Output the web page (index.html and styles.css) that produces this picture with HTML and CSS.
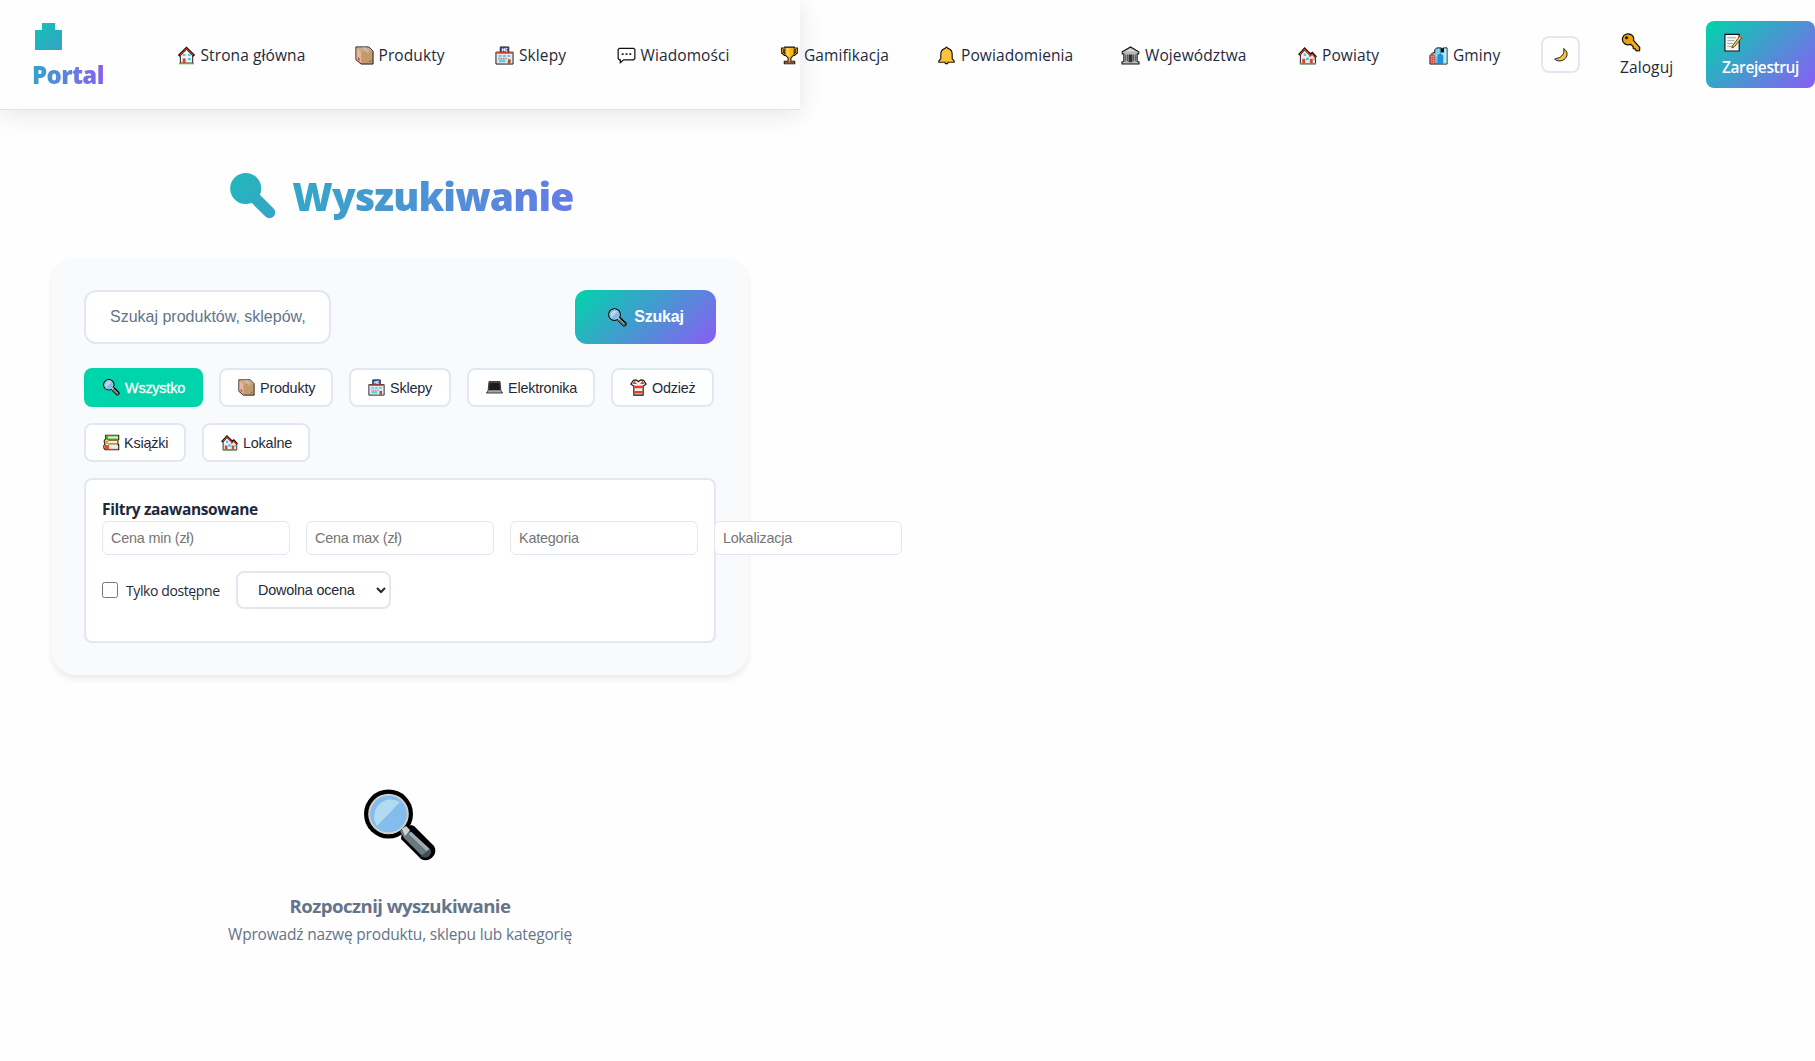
FILE: index.html
```html
<!DOCTYPE html>
<html lang="pl">
<head>
<meta charset="utf-8">
<title>Portal - Wyszukiwanie</title>
<link rel="stylesheet" href="styles.css">
</head>
<body>
<svg class="sprite" aria-hidden="true">
  <defs>
    <linearGradient id="brand" x1="0" y1="0" x2="1" y2="1"><stop offset="0" stop-color="#10c4b1"/><stop offset="1" stop-color="#39a0cb"/></linearGradient>
    <linearGradient id="lens" x1="0" y1="0" x2="46" y2="46" gradientUnits="userSpaceOnUse"><stop offset="0" stop-color="#22b8bb"/><stop offset="1" stop-color="#36a4c9"/></linearGradient>
    <symbol id="home" viewBox="0 0 20 20"><path d="M3.500 10v8h13v-8L10 3.500z" fill="#f2f2f2" stroke="#111"/><path d="M2 18.500h16" stroke="#5cbb2c" stroke-width="1.500"/><path d="M1.800 10.500 10 2.300l8.200 8.200" fill="none" stroke="#111" stroke-width="2.600"/><path d="M3 9.700 10 2.900l7 6.800" fill="none" stroke="#d63a22" stroke-width="1.300"/><path d="M6 8.500h3v2H6zm5.500 0h3v2h-3zm0 4h3v2.500h-3z" fill="#4cc9f5"/><path d="M6 13h3v5H6z" fill="#e5421f"/></symbol>
    <symbol id="box" viewBox="0 0 20 20"><path d="M1 1h13.500L19 5.500V19H6.500L1 14.500z" fill="#c49a6c" stroke="#111"/><path d="M1.600 1.600 6.500 6v12.300L1.600 14.200z" fill="#e2b99e"/><path d="M2 1.500h12.300l4.200 4H6.500z" fill="#cfa98a"/><path d="M7.500 1.500h3L14 6v2.500L12 6z" fill="#bec3c9"/><path d="M3 11.500v3l2 1.500v-3z" fill="#e2455a"/><path d="m15 17 2-2" stroke="#604529"/></symbol>
    <symbol id="shop" viewBox="0 0 20 20"><path d="M1 6.500h18V19H1z" fill="#e5e8ea" stroke="#111"/><path d="M5.500 1h9v6h-9z" fill="#315bd8" stroke="#222"/><path d="M8 2.500v3m0-1.500h2m0-1.500v3m3-3h-1.500v3H13" stroke="#fff" fill="none"/><path d="M1.500 7.300h17" stroke="#e64224" stroke-width="1.600"/><path d="M4 9.500h3v2H4zm4.500 0h3v2h-3zm4.500 0h3v2h-3zM4 14h7v3H4z" fill="#52d4ee"/><path d="M3.500 13h9" stroke="#e64224" stroke-dasharray="1.500 1"/><path d="M13.500 14h3v4.500h-3z" fill="#9a5a32"/></symbol>
    <symbol id="chat" viewBox="0 0 20 20"><path d="M2.500 2.500h15l1.300 1.300v9.400l-1.300 1.300H7l-3.500 3v-3h-1l-1.300-1.300V3.800z" fill="#fff" stroke="#111" stroke-width="1.300"/><path d="M5 7.700h2v1.700H5zm4 0h2v1.700H9zm4 0h2v1.700h-2z" fill="#222"/></symbol>
    <symbol id="cup" viewBox="0 0 20 20"><path d="M5 3H2.500v4L5 9h1m9-6h2.500v4L15 9h-1" fill="none" stroke="#111" stroke-width="2.800"/><path d="M5 1.200h10V9l-3.500 3.500V16h4v2.700h-11V16h4v-3.500L5 9z" fill="#f7b718" stroke="#111" stroke-width="1.100"/><path d="M5 3H2.500v4L5 9m10-6h2.500v4L15 9" fill="none" stroke="#f5a90c"/><path d="M7 2v7l3 3V2z" fill="#ffd34f"/><path d="M5 16.500h10v2H5z" fill="#8b5230"/></symbol>
    <symbol id="bell" viewBox="0 0 20 20"><path d="M8.500 2.500 10 1l1.500 1.500C15 3.500 16 6 16 9v4.500l2 2V17h-6l-1 1.500H9L8 17H2v-1.500l2-2V9c0-3 1-5.500 4.500-6.500z" fill="#fdc33c" stroke="#111" stroke-width="1.200"/><path d="M3 16.500h14" stroke="#e29a16"/></symbol>
    <symbol id="bank" viewBox="0 0 20 20"><path d="M1.300 6 10 1l8.700 5v2.500H17V16l2 1v2H1v-2l2-1V8.500H1.300z" fill="#b6b8ba" stroke="#111" stroke-width="1.100"/><path d="M4 5.800 10 2.500l6 3.300z" fill="#d8d9da"/><path d="M5 9v7m2-7v7m6-7v7m2-7v7" stroke="#444"/><path d="M8 9h4v8H8z" fill="#333"/></symbol>
    <symbol id="houses" viewBox="0 0 20 20"><path d="M2.500 9.500v9.300h16V11L15 8l-2 1.500L7 3z" fill="#f1eeee" stroke="#111"/><path d="M1 9.500 7 3l6 6 2-1.500 4 4.500" fill="none" stroke="#111" stroke-width="2.600"/><path d="M2 9 7 3.500l5.500 5.700m-.5 2.300 3-3 3.500 3.500" fill="none" stroke="#e03e2a" stroke-width="1.300"/><path d="M4.500 13.500h3v5h-3zm8 0h3v5h-3z" fill="#df4328"/><path d="M6 8h2.500v2.500H6zm2.500 4h3v3h-3zm7.500 1h2v2h-2z" fill="#49c7f2"/><path d="M2 18.500h17" stroke="#43ac3b" stroke-width="1.400"/></symbol>
    <symbol id="city" viewBox="0 0 20 20"><path d="M1 10 4 7h2V4l2-2h5v4h2V2h4v17H1z" fill="#5fc8ed" stroke="#111"/><path d="M1.500 10 4 8l2.500 3v7.500h-5z" fill="#e44c32"/><path d="M12.500 6h3.300V2.500h2.700v16H15z" fill="#aee5f4"/><path d="m9 10 3-2.500 3 2.500v8.500H9z" fill="#1e91dd"/><path d="M13 2.500V6h2V2.500" stroke="#111" stroke-width="1.500"/><path d="M8 4v8m2-9v6m7-4v12M3 10.500v7m2-7v7" stroke="#fff" stroke-width=".7" stroke-dasharray="1 1"/></symbol>
    <symbol id="moon" viewBox="0 0 20 20"><path d="M13.300 2c5 3.200 5.600 8.500 2 12.300-3.800 4-9.700 4-13.200.8 1.300-1 3.200-.5 6-1.900 4.600-2.300 6.300-6.800 5.200-11.200z" fill="#fbc43b" stroke="#111" stroke-width="1.200"/></symbol>
    <symbol id="key" viewBox="0 0 20 20"><path d="M7 .8c4 0 6.800 3.400 5.700 7l6.500 7.300-.2 3.500-3.500.3-1-2-2-.5-.3-2.200-2.500-2.200C5 13.500.9 10.800.9 6.800.9 3.500 3.500.8 7 .8z" fill="#eba00c" stroke="#111" stroke-width="1.300"/><circle cx="5.300" cy="5" r="1.600" fill="#111"/><path d="m10.500 9 6.500 7" stroke="#ffcb55"/></symbol>
    <symbol id="note" viewBox="0 0 20 20"><path d="M1.500 1.500h15V19h-15z" fill="#f5f5f5" stroke="#111" stroke-width="1.200"/><path d="M4 5h9M4 8h7.500M4 11h6M4 14h5" stroke="#a2a2a2"/><path d="m9.500 13.500 7.500-10 2.300 1.500-7.800 9.500-2.700 1.200z" fill="#f9c74b" stroke="#24211b" stroke-width=".8"/><path d="m17 3.500 1.200-1.300 1.800 1.300-1 1.500z" fill="#e36b68"/></symbol>
    <symbol id="search" viewBox="0 0 72 73"><path d="m38 42 9-6 3 1 20 20c5 8-5 18-13 13L37 50z" fill="#000"/><circle cx="24.500" cy="25" r="24.500" fill="#000"/><circle cx="24.500" cy="25" r="20.300" fill="#cfcfcf"/><circle cx="24.500" cy="25" r="18.300" fill="#82bdec"/><path d="M13 37A17 17 0 0 1 36 13z" fill="#b2daf1"/><path d="m36 42 5-4 25 22c3 5-3 11-8 7L40 49z" fill="#687980"/><path d="m38 40 4-3 4 4-5 6z" fill="#d0d1d1"/><path d="m46 44 18 17" stroke="#a1adb4" stroke-width="3.500"/><path d="m66 60-9 7c4 4 12 0 9-7z" fill="#424c56"/></symbol>
    <symbol id="laptop" viewBox="0 0 20 20"><path d="M3.500 3h13l1 10.500 2 3H.5l2-3z" fill="#888" stroke="#222"/><path d="M4 4h12l.5 9h-13z" fill="#191b1e"/><path d="M2 15h16" stroke="#bbb"/></symbol>
    <symbol id="shirt" viewBox="0 0 20 20"><path d="M4 1.500 7 1l3 2 3-2 3 .5L19 6l-3.500 2.200V19h-11V8.200L1 6z" fill="#eee" stroke="#111" stroke-width="1.300"/><path d="M5 8h10v3H5zm0 6h10v3H5zM5 2l3 4H3zm10 0-3 4h5z" fill="#ed3b1d"/></symbol>
    <symbol id="books" viewBox="0 0 20 20"><path d="M3 1.500h15.500v5h-1v6h1V18.500H2.500l-1.500-2v-3l1.500-1.500L1.500 10V7.500L3 6z" fill="#f3f0e5" stroke="#111" stroke-width="1.200"/><path d="M4 2.200h14m-14 4h14" stroke="#42a51d" stroke-width="1.700"/><path d="M6 7.500h12m-12 4.200h12" stroke="#9b742b" stroke-width="1.500"/><path d="M2 13h5v5H3l-1-1.500z" fill="#f04e12"/><path d="M3 2h3v4H3z" fill="#43b118"/><path d="M2 7.500h4v4H3z" fill="#e1a12b"/><path d="M6 18h12" stroke="#d94621" stroke-width="1.200"/></symbol>
  </defs>
</svg>

<div class="page">
<header class="header">
  <a class="logo"><svg class="logo-mark" viewBox="0 0 27 27"><path d="M7 0h13v7h7v20H0V7h7z" fill="url(#brand)"/></svg><span class="logo-text">Portal</span></a>
  <nav class="nav">
    <a class="nav-link"><svg class="ico"><use href="#home"/></svg><span>Strona główna</span></a>
    <a class="nav-link"><svg class="ico"><use href="#box"/></svg><span>Produkty</span></a>
    <a class="nav-link"><svg class="ico"><use href="#shop"/></svg><span>Sklepy</span></a>
    <a class="nav-link"><svg class="ico"><use href="#chat"/></svg><span>Wiadomości</span></a>
    <a class="nav-link"><svg class="ico"><use href="#cup"/></svg><span>Gamifikacja</span></a>
    <a class="nav-link"><svg class="ico"><use href="#bell"/></svg><span>Powiadomienia</span></a>
    <a class="nav-link"><svg class="ico"><use href="#bank"/></svg><span>Województwa</span></a>
    <a class="nav-link"><svg class="ico"><use href="#houses"/></svg><span>Powiaty</span></a>
    <a class="nav-link"><svg class="ico"><use href="#city"/></svg><span>Gminy</span></a>
  </nav>
  <button class="theme" aria-label="Motyw"><svg class="ico-moon"><use href="#moon"/></svg></button>
  <a class="login"><svg class="ico-auth"><use href="#key"/></svg><span>Zaloguj</span></a>
  <a class="register"><svg class="ico-auth"><use href="#note"/></svg><span>Zarejestruj</span></a>
</header>

<main class="main">
  <h1 class="title"><svg class="title-icon" viewBox="0 0 46 46"><circle cx="15.700" cy="15.500" r="15.500" fill="url(#lens)"/><path d="m26 26 13.500 13.500" stroke="url(#lens)" stroke-width="11.500" stroke-linecap="round"/></svg><span class="title-text">Wyszukiwanie</span></h1>
  <section class="card">
    <div class="search-row">
      <input class="search-input" type="text" placeholder="Szukaj produktów, sklepów,">
      <button class="search-btn"><svg class="ico-btn"><use href="#search"/></svg>Szukaj</button>
    </div>
    <div class="chips">
      <button class="chip chip-on"><svg class="ico-chip"><use href="#search"/></svg>Wszystko</button>
      <button class="chip"><svg class="ico-chip"><use href="#box"/></svg>Produkty</button>
      <button class="chip"><svg class="ico-chip"><use href="#shop"/></svg>Sklepy</button>
      <button class="chip"><svg class="ico-chip"><use href="#laptop"/></svg>Elektronika</button>
      <button class="chip"><svg class="ico-chip"><use href="#shirt"/></svg>Odzież</button>
      <button class="chip"><svg class="ico-chip"><use href="#books"/></svg>Książki</button>
      <button class="chip"><svg class="ico-chip"><use href="#houses"/></svg>Lokalne</button>
    </div>
    <div class="filters">
      <h4 class="filters-title">Filtry zaawansowane</h4>
      <div class="fields">
        <input class="field" placeholder="Cena min (zł)">
        <input class="field" placeholder="Cena max (zł)">
        <input class="field" placeholder="Kategoria">
        <input class="field" placeholder="Lokalizacja">
      </div>
      <div class="options">
        <label class="check"><input class="check-box" type="checkbox"><span>Tylko dostępne</span></label>
        <select class="rating"><option>Dowolna ocena</option></select>
      </div>
    </div>
  </section>
  <section class="empty">
    <svg class="empty-icon"><use href="#search"/></svg>
    <h3 class="empty-title">Rozpocznij wyszukiwanie</h3>
    <p class="empty-text">Wprowadź nazwę produktu, sklepu lub kategorię</p>
  </section>
</main>
</div>
</body>
</html>
```
FILE: styles.css
```css
* { box-sizing: border-box; margin: 0; padding: 0; }
body {
  min-height: 1061px;
  background: #fefefe;
  color: #1e293b;
  font-family: "Open Sans", "Noto Sans", sans-serif;
}
.page { width: 800px; }
.sprite { position: absolute; width: 0; height: 0; }
svg { flex: none; display: block; }

.header {
  display: flex;
  align-items: center;
  width: 800px;
  height: 110px;
  padding-left: 32px;
  border-bottom: 1px solid #e2e4e8;
  box-shadow: 0 4px 24px rgba(0, 0, 0, .1);
  background: #fefefe;
}
.header > * { flex: none; }
.logo { width: 144.500px; height: 70px; padding: 3px 0 0 3px; }
.logo-mark { width: 27px; height: 27px; }
.logo-text {
  display: inline-block;
  margin: 8px 0 0 -3px;
  font-size: 24px;
  font-weight: 800;
  line-height: 33px;
  letter-spacing: -.6px;
  background: linear-gradient(100deg, #33a6c8, #8b5cf6);
  -webkit-background-clip: text;
  background-clip: text;
  color: transparent;
}
.nav { display: flex; }
.nav-link {
  display: flex;
  align-items: center;
  gap: 5px;
  height: 38px;
  padding-top: 1px;
  font-size: 15.500px;
  font-weight: 500;
  white-space: nowrap;
  letter-spacing: .1px;
}
.nav-link:nth-child(1) { width: 178px; }
.nav-link:nth-child(2) { width: 140.500px; }
.nav-link:nth-child(3) { width: 121.500px; }
.nav-link:nth-child(4) { width: 163.500px; }
.nav-link:nth-child(5) { width: 157px; }
.nav-link:nth-child(6) { width: 184px; }
.nav-link:nth-child(7) { width: 177px; }
.nav-link:nth-child(8) { width: 131px; }
.nav-link:nth-child(9) { width: 112px; }
.ico { width: 19px; height: 19px; }
.theme {
  display: grid;
  place-items: center;
  width: 39px;
  height: 37px;
  border: 2px solid #e2e8f0;
  border-radius: 8px;
  background: #fff;
}
.ico-moon { width: 16px; height: 16px; }
.login, .register {
  height: 67px;
  padding-top: 12px;
  font-size: 15.500px;
  line-height: 25px;
}
.login { width: 86px; margin-left: 40px; font-weight: 500; letter-spacing: .1px; }
.register {
  width: 109px;
  padding-left: 16px;
  border-radius: 8px;
  background: linear-gradient(135deg, #00d4aa, #8b5cf6);
  color: #fff;
  font-weight: 600;
  letter-spacing: -.4px;
}
.ico-auth { width: 20px; height: 19px; margin-left: 1px; margin-bottom: 3px; }

.main { width: 800px; padding: 48px 52px; }
.title { display: flex; justify-content: center; gap: 16px; height: 100px; padding: 12px 0 0 4px; }
.title-icon { width: 46px; height: 46px; margin-top: 3px; }
.title-text {
  height: 60px;
  font-size: 39px;
  font-weight: 800;
  line-height: 52px;
  letter-spacing: -.85px;
  background: linear-gradient(100deg, #33a8c6, #687be5);
  -webkit-background-clip: text;
  background-clip: text;
  color: transparent;
}
.card {
  height: 417px;
  padding: 32px;
  border-radius: 24px;
  background: #f8fafc;
  box-shadow: 0 4px 6px rgba(0, 0, 0, .08);
}
.search-row { display: flex; justify-content: space-between; }
.search-input {
  width: 247px;
  height: 54px;
  padding: 0 24px;
  border: 2px solid #e2e8f0;
  border-radius: 12px;
  background: #fff;
  font: 16px "Liberation Sans", sans-serif;
}
.search-input::placeholder { color: #64748b; }
.search-btn {
  display: flex;
  align-items: center;
  justify-content: center;
  gap: 7px;
  width: 141px;
  height: 54px;
  padding-left: 1px;
  border: 0;
  border-radius: 12px;
  background: linear-gradient(135deg, #00d4aa, #8b5cf6);
  color: #fff;
  font: bold 16px "Liberation Sans", sans-serif;
  letter-spacing: -.2px;
}
.ico-btn { width: 19px; height: 19px; }
.chips { display: flex; flex-wrap: wrap; gap: 16px; margin: 24px -4px 16px 0; }
.chip {
  display: flex;
  align-items: center;
  gap: 5px;
  height: 39px;
  padding-left: 17px;
  border: 2px solid #e2e8f0;
  border-radius: 8px;
  background: #fff;
  color: #1e293b;
  font: 14.400px "Liberation Sans", sans-serif;
  letter-spacing: -.2px;
  white-space: nowrap;
}
.chip:nth-child(1) { width: 119px; }
.chip:nth-child(2) { width: 114px; }
.chip:nth-child(3) { width: 102px; }
.chip:nth-child(4) { width: 128px; }
.chip:nth-child(5) { width: 103px; }
.chip:nth-child(6) { width: 102px; gap: 4px; }
.chip:nth-child(7) { width: 108px; }
.chip-on { border-color: #00d4aa; background: #00d4aa; color: #fff; -webkit-text-stroke: .3px #fff; }
.ico-chip { width: 17px; height: 17px; }
.filters {
  height: 165px;
  padding: 16px;
  border: 2px solid #e2e8f0;
  border-radius: 8px;
  background: #fff;
}
.filters-title { height: 25px; font-size: 15.500px; font-weight: 700; line-height: 27px; letter-spacing: -.38px; }
.fields { display: flex; gap: 16px; }
.field {
  flex: none;
  width: 188px;
  height: 34px;
  padding: 0 8px;
  border: 1px solid #e2e8f0;
  border-radius: 6px;
  background: #fff;
  font: 14.400px "Liberation Sans", sans-serif;
  letter-spacing: -.2px;
}
.field::placeholder { color: #757575; }
.options { display: flex; align-items: center; gap: 16px; margin-top: 16px; }
.check { display: flex; align-items: center; gap: 8px; width: 118px; font-size: 14px; letter-spacing: -.4px; white-space: nowrap; }
.check-box { flex: none; width: 16px; height: 16px; }
.rating {
  width: 155px;
  height: 38px;
  padding: 0 16px;
  border: 2px solid #e2e8f0;
  border-radius: 8px;
  background: #fff;
  color: #1e293b;
  font: 14.400px "Liberation Sans", sans-serif;
  letter-spacing: -.2px;
}
.empty { display: flex; flex-direction: column; align-items: center; padding-top: 114px; color: #64748b; }
.empty-icon { width: 72px; height: 73px; }
.empty-title { margin-top: 30px; font-size: 18.600px; font-weight: 700; line-height: 27px; letter-spacing: -.55px; white-space: nowrap; }
.empty-text { margin-top: 2px; font-size: 15.500px; line-height: 27px; letter-spacing: -.18px; white-space: nowrap; }
```
